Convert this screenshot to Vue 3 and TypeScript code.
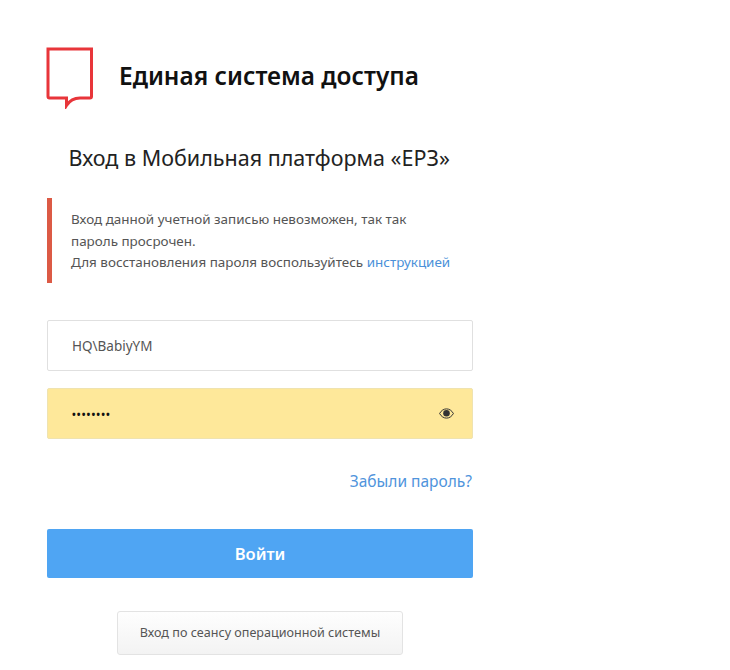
<script setup lang="ts">
const username: string = 'HQ\\BabiyYM'
const dots: string = '••••••••'
</script>

<template>
  <main class="page">
    <header class="brand">
      <svg class="logo" width="48" height="62" viewBox="0 0 48 62" fill="none" aria-hidden="true">
        <path d="M2 2H45.5V49.5Q45.5 51 44 51H34C28 51 24 53 20.5 58.5V51H3.5Q2 51 2 49.5Z" stroke="#E8353A" stroke-width="3" stroke-linejoin="miter" />
      </svg>
      <h1 class="brand-title">Единая система доступа</h1>
    </header>

    <h2 class="subtitle">Вход в Мобильная платформа «ЕРЗ»</h2>

    <section class="alert">
      <p>Вход данной учетной записью невозможен, так так</p>
      <p>пароль просрочен.</p>
      <p>Для восстановления пароля воспользуйтесь <a href="#" class="link">инструкцией</a></p>
    </section>

    <div class="field">{{ username }}</div>
    <div class="field field-filled">
      <span class="dots">{{ dots }}</span>
      <svg class="eye" width="15" height="11" viewBox="0 0 15 11" aria-hidden="true">
        <path d="M0.6 5.5C2.4 2.3 4.8 0.9 7.5 0.9S12.6 2.3 14.4 5.5C12.6 8.7 10.2 10.1 7.5 10.1S2.4 8.7 0.6 5.5Z" fill="none" stroke="#333" stroke-width="1" />
        <circle cx="7.5" cy="5.2" r="3.3" fill="#333" />
      </svg>
    </div>

    <div class="forgot-row"><a href="#" class="forgot">Забыли пароль?</a></div>

    <button class="submit" type="button">Войти</button>

    <div class="alt-row">
      <button class="alt" type="button">Вход по сеансу операционной системы</button>
    </div>
  </main>
</template>

<style scoped>
.page {
  width: 426px;
  padding: 47px 0 0 47px;
  font-family: "Noto Sans", "Open Sans", sans-serif;
  color: #222;
}
.brand {
  display: flex;
  align-items: flex-start;
  height: 62px;
}
.logo {
  flex: none;
  margin-left: -1px;
}
.brand-title {
  margin: 12px 0 0 25px;
  font-size: 24.4px;
  line-height: 34px;
  font-weight: 600;
  color: #111;
  white-space: nowrap;
}
.subtitle {
  margin: 35px 0 0 21.5px;
  font-size: 21.5px;
  line-height: 28px;
  font-weight: 400;
  color: #222;
  white-space: nowrap;
}
.alert {
  margin-top: 26px;
  height: 85px;
  border-left: 5px solid #DC5A45;
  padding: 11px 0 0 19px;
  box-sizing: border-box;
  font-size: 13.45px;
  line-height: 21.5px;
  color: #555;
}
.alert p {
  margin: 0;
  white-space: nowrap;
}
.link {
  color: #4A90D9;
  text-decoration: none;
}
.field {
  display: flex;
  align-items: center;
  justify-content: space-between;
  box-sizing: border-box;
  height: 51px;
  margin-top: 37px;
  padding: 0 18px 0 24px;
  border: 1px solid #E0E0E0;
  border-radius: 2px;
  background: #fff;
  font-size: 13.5px;
  color: #555;
}
.field-filled {
  margin-top: 17px;
  background: #FEE89A;
  border-color: #EFE3B0;
  color: #111;
}
.dots {
  font-size: 10px;
  letter-spacing: 1.1px;
  font-weight: 700;
}
.forgot-row {
  display: flex;
  justify-content: flex-end;
  margin-top: 32px;
  padding-right: 1px;
  height: 20px;
}
.forgot {
  font-size: 15.5px;
  line-height: 20px;
  color: #4F94DC;
  text-decoration: none;
}
.submit {
  display: block;
  width: 100%;
  height: 49px;
  margin-top: 38px;
  padding: 1px 0 0;
  border: none;
  border-radius: 2px;
  background: #4FA5F3;
  color: #fff;
  font: 600 16.5px/1 "Noto Sans", "Open Sans", sans-serif;
}
.alt-row {
  display: flex;
  justify-content: center;
  margin-top: 33px;
}
.alt {
  width: 286px;
  height: 44px;
  box-sizing: border-box;
  border: 1px solid #E3E3E3;
  border-radius: 3px;
  background: linear-gradient(#FEFEFE, #F3F3F3);
  color: #555;
  font: 400 12.6px/1 "Noto Sans", "Open Sans", sans-serif;
}
</style>
